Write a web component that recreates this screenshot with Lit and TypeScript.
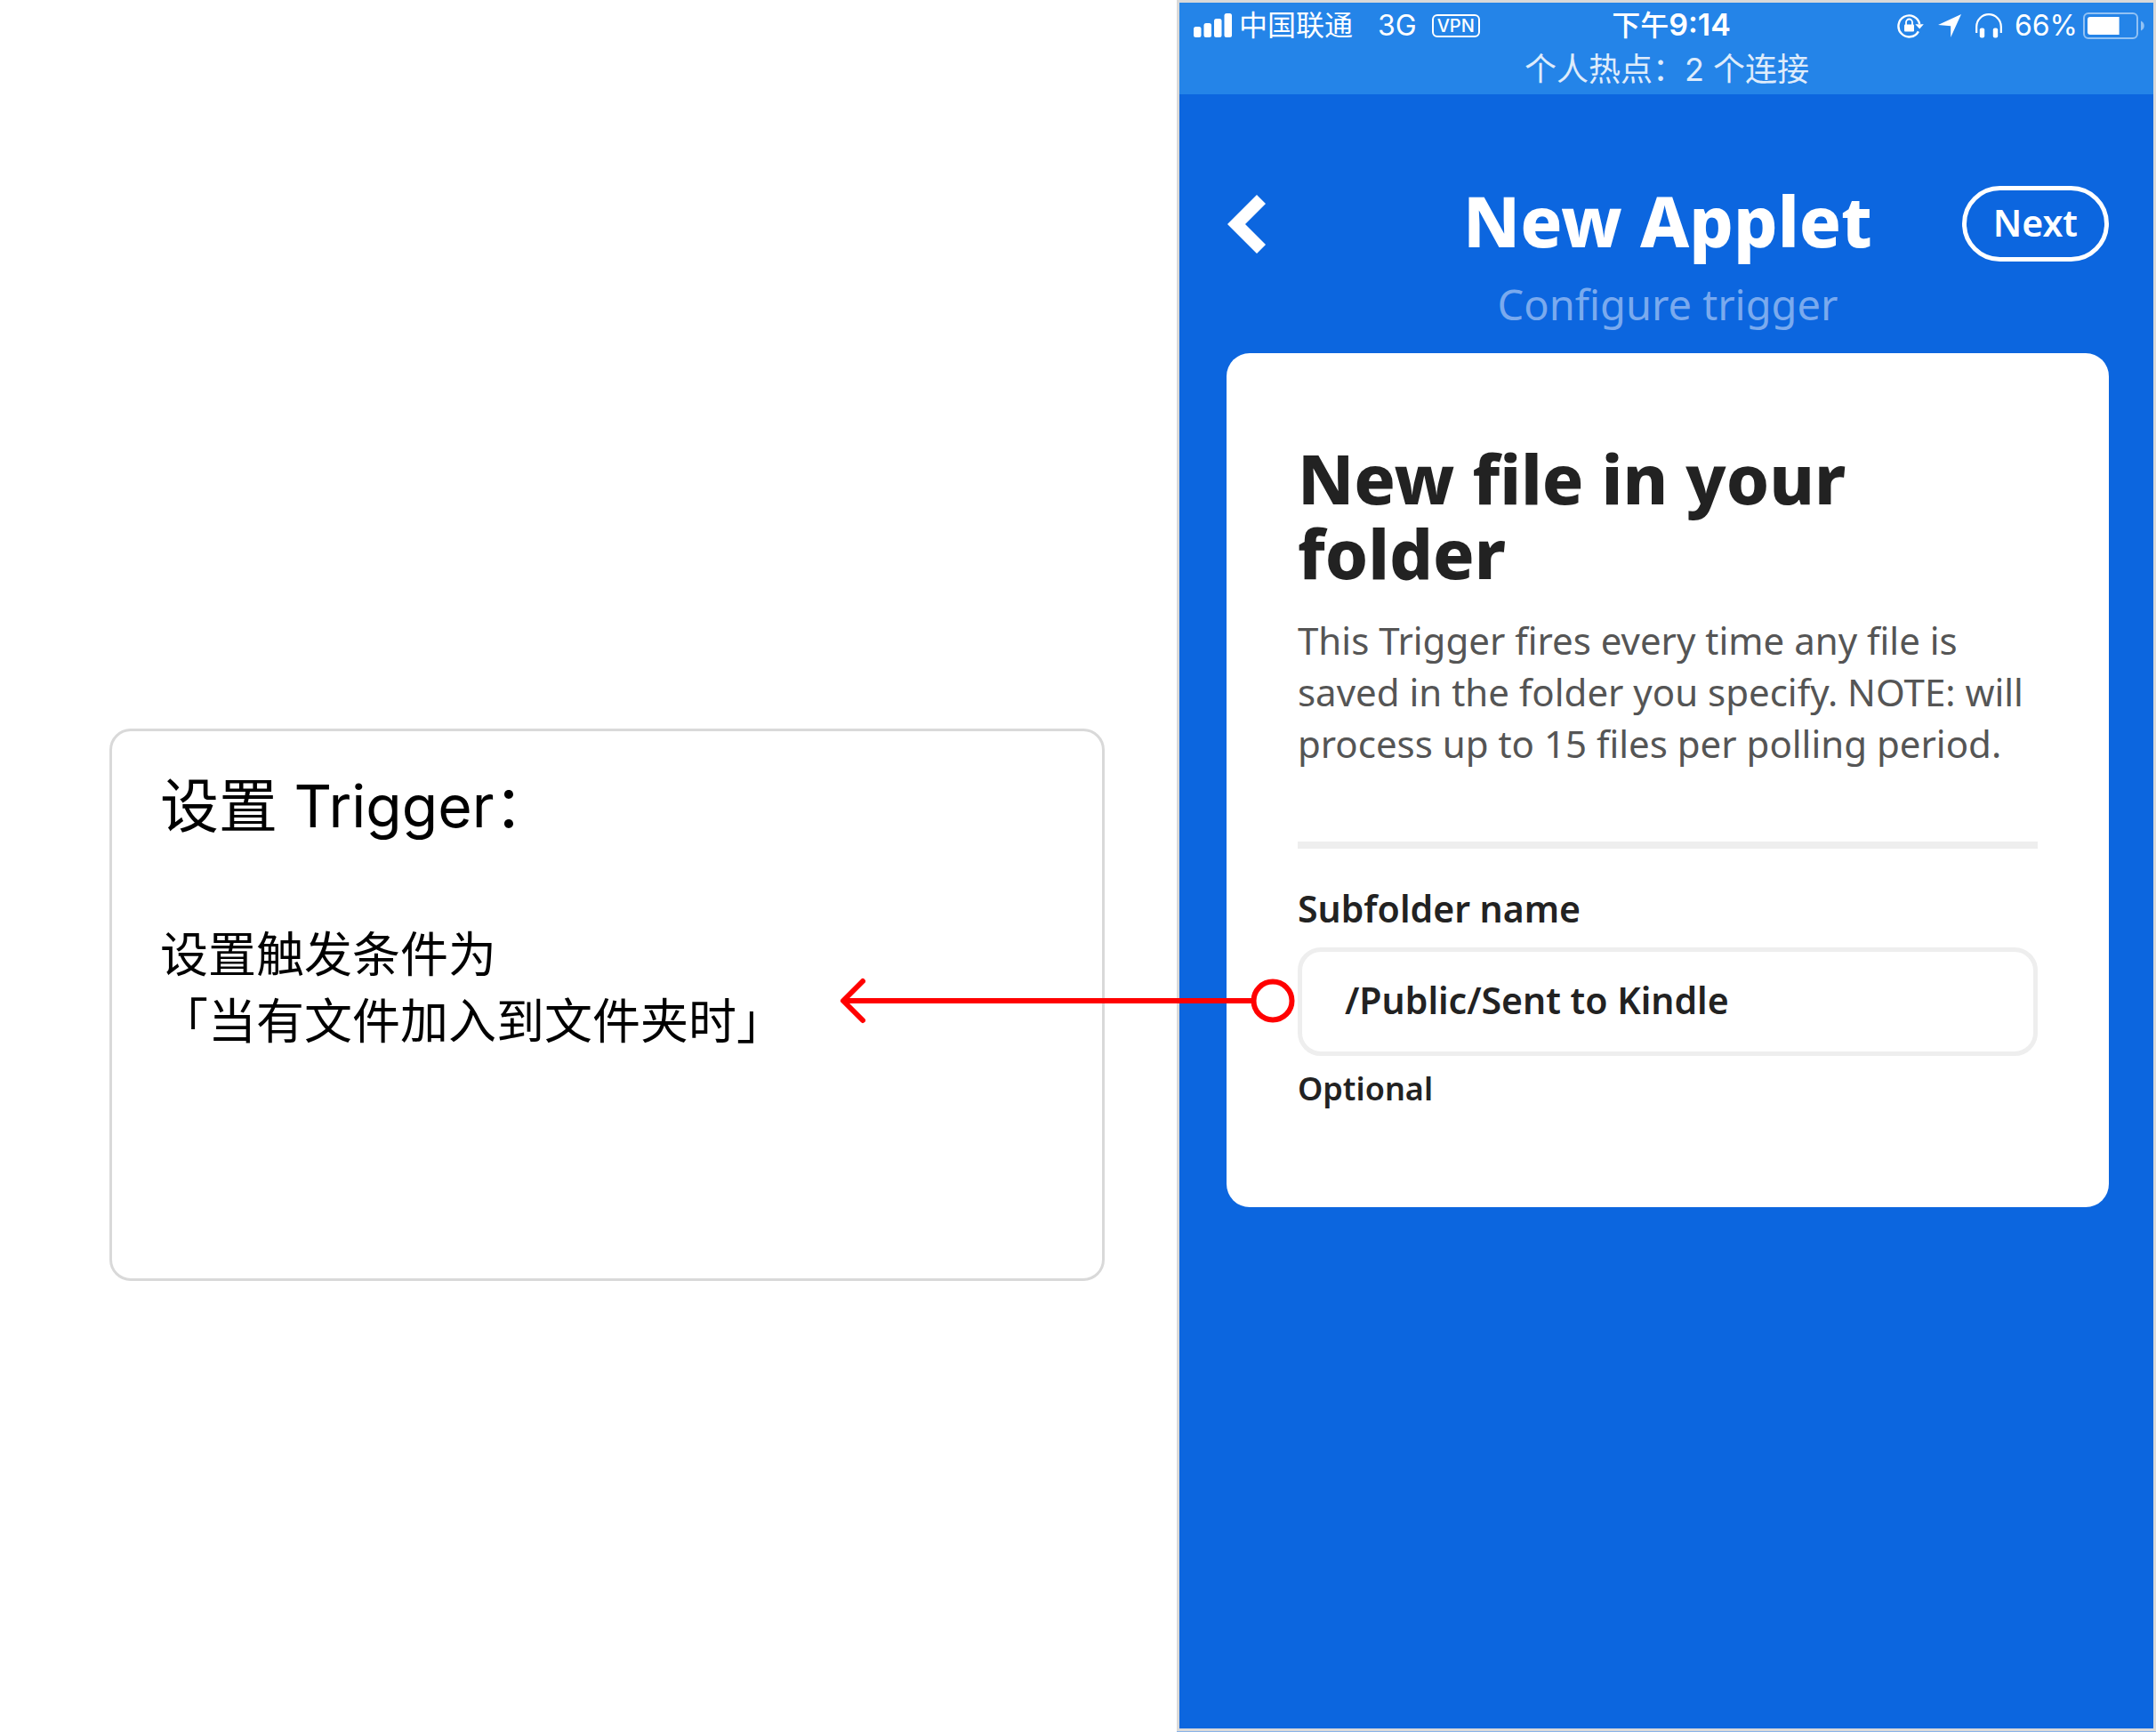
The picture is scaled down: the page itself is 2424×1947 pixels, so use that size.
import { LitElement, html, css } from "lit";
import { customElement, property, state } from "lit/decorators.js";

/** iOS status bar with carrier, clock, indicators and the hotspot line. */
@customElement("status-bar")
class StatusBar extends LitElement {
  @property() carrier = "";
  @property() network = "";
  @property() time = "";
  @property() meridiem = "";
  @property({ type: Number }) battery = 0;
  @property() notice = "";

  static styles = css`
    :host {
      display: block;
      padding: 1px 9px 2px 16px;
      background: #2484e8;
      color: #fff;
      font-family: Inter, "Noto Sans CJK SC", sans-serif;
      font-size: 32px;
    }
    .row {
      display: grid;
      grid-template-columns: 1fr auto 1fr;
      align-items: center;
      height: 48px;
      line-height: 48px;
    }
    .side {
      display: flex;
      align-items: center;
      white-space: nowrap;
    }
    .end {
      justify-content: flex-end;
    }
    .carrier {
      margin-left: 7px;
    }
    .network {
      margin-left: 28px;
    }
    .vpn {
      box-sizing: border-box;
      height: 26px;
      margin-left: 17px;
      padding: 0 4px;
      border: 2px solid #fff;
      border-radius: 6px;
      font-size: 20px;
      font-weight: 500;
      line-height: 22px;
    }
    .time {
      padding-left: 4px;
      font-weight: 500;
    }
    .clock {
      font-size: 34px;
      font-weight: 600;
    }
    .lock,
    .location {
      margin-right: 16px;
    }
    .phones {
      margin-right: 14px;
    }
    .battery {
      margin-left: 6px;
    }
    .notice {
      margin: 0;
      padding-right: 6px;
      font-size: 36px;
      line-height: 52px;
      text-align: center;
      opacity: 0.85;
    }
    svg {
      display: block;
      flex: none;
    }
  `;

  render() {
    return html`
      <div class="row">
        <div class="side">
          <svg width="44" height="28" viewBox="0 0 44 28" fill="#fff" aria-hidden="true">
            <rect x="0" y="15" width="8.5" height="12" rx="2.5" />
            <rect x="11.5" y="11" width="8.5" height="16" rx="2.5" />
            <rect x="23" y="6" width="8.5" height="21" rx="2.5" />
            <rect x="34.5" y="0" width="8.5" height="27" rx="2.5" />
          </svg>
          <span class="carrier">${this.carrier}</span>
          <span class="network">${this.network}</span>
          <span class="vpn">VPN</span>
        </div>
        <div class="time">${this.meridiem}<span class="clock">${this.time}</span></div>
        <div class="side end">
          <svg class="lock" width="30" height="28" viewBox="0 0 30 28" aria-hidden="true">
            <path d="M23.9 20.3A12 12 0 1 1 25.2 12" fill="none" stroke="#fff" stroke-width="2.4" />
            <path d="M20.4 12.2h9.4L25.2 17.4z" fill="#fff" />
            <rect x="8" y="12.6" width="11" height="8" rx="1" fill="#fff" />
            <path d="M10 13V10a3.5 3.5 0 0 1 7 0v3" fill="none" stroke="#fff" stroke-width="1.8" />
          </svg>
          <svg class="location" width="26" height="28" viewBox="0 0 26 28" aria-hidden="true">
            <path d="M26 1 14.2 27V14.3L0 13z" fill="#fff" />
          </svg>
          <svg class="phones" width="30" height="28" viewBox="0 0 30 28" aria-hidden="true">
            <path d="M1.2 22V15a13.8 13.8 0 0 1 27.6 0v7" fill="none" stroke="#fff" stroke-width="2.2" />
            <rect x="4.8" y="16.5" width="5.4" height="11" rx="2" fill="#fff" />
            <rect x="19.8" y="16.5" width="5.4" height="11" rx="2" fill="#fff" />
          </svg>
          <span>${this.battery}%</span>
          <svg class="battery" width="70" height="30" viewBox="0 0 70 30" aria-hidden="true">
            <rect x="1" y="1" width="60" height="28" rx="5" fill="none" stroke="#fff" stroke-opacity=".5" stroke-width="2" />
            <path d="M65 9.5c5 2 5 9 0 11z" fill="#fff" fill-opacity=".5" />
            <path d="M8 5h${(54 * this.battery) / 100 - 3}v20H8a3 3 0 0 1-3-3V8a3 3 0 0 1 3-3z" fill="#fff" />
          </svg>
        </div>
      </div>
      <p class="notice">${this.notice}</p>
    `;
  }
}

/** Explanatory card beside the phone screen. */
@customElement("note-card")
class NoteCard extends LitElement {
  @property() heading = "";
  @property({ type: Array }) lines: string[] = [];

  static styles = css`
    :host {
      display: block;
      box-sizing: border-box;
      min-height: 621px;
      padding: 47px 54px;
      border: 3px solid #d9d9d9;
      border-radius: 24px;
      background: #fff;
      color: #000;
      font-family: Inter, "Noto Sans CJK SC", sans-serif;
      line-height: 75px;
    }
    h1 {
      margin: 0 0 92px;
      font-size: 66px;
      font-weight: 400;
    }
    p {
      margin: 0;
      font-size: 54px;
    }
  `;

  render() {
    return html`
      <h1>${this.heading}</h1>
      ${this.lines.map((line) => html`<p>${line}</p>`)}
    `;
  }
}

/** Phone screen with the trigger form. */
@customElement("phone-screen")
class PhoneScreen extends LitElement {
  @state() private folder = "/Public/Sent to Kindle";

  static styles = css`
    :host {
      display: block;
      box-sizing: border-box;
      border: 3px solid #d9d9d9;
      background: #0c66df;
      box-shadow: 0 1px #8ab4e8;
      font-family: "Noto Sans", sans-serif;
      color: #222;
    }
    main {
      padding: 103px 50px 100px 53px;
    }
    header {
      display: grid;
      grid-template-columns: 1fr auto 1fr;
      align-items: start;
      color: #fff;
    }
    button {
      box-sizing: border-box;
      height: 85px;
      background: none;
      color: inherit;
      font: inherit;
      cursor: pointer;
    }
    .back {
      justify-self: start;
      padding: 0;
      border: 0;
    }
    .back svg {
      display: block;
    }
    .next {
      justify-self: end;
      padding: 0 30px 4px;
      border: 5px solid #fff;
      border-radius: 43px;
      font-size: 41px;
      font-weight: 600;
      line-height: 70px;
    }
    h1 {
      margin: 0;
      font-size: 78px;
      font-weight: 800;
      line-height: 78px;
      white-space: nowrap;
    }
    .step {
      margin: 18px 0 25px;
      color: #7aaaee;
      font-size: 47px;
      line-height: 60px;
      text-align: center;
    }
    .card {
      padding: 99px 80px 110px;
      border-radius: 26px;
      background: #fff;
    }
    h2 {
      margin: 0;
      font-size: 77px;
      font-weight: 800;
      line-height: 84px;
    }
    .about {
      margin: 27px 0 81px;
      color: #555;
      font-size: 42px;
      line-height: 58px;
    }
    hr {
      height: 8px;
      margin: 0 0 42px;
      border: 0;
      background: #eee;
    }
    label {
      display: block;
      margin-bottom: 19px;
      font-size: 41px;
      font-weight: 600;
      line-height: 50px;
    }
    .field {
      position: relative;
    }
    input {
      display: block;
      box-sizing: border-box;
      width: 100%;
      height: 122px;
      padding: 0 48px 4px;
      border: 5px solid #eee;
      border-radius: 26px;
      outline: none;
      background: #fff;
      color: inherit;
      font: 600 41px "Noto Sans", sans-serif;
    }
    .pointer {
      position: absolute;
      top: calc(50% - 31px);
      right: calc(100% + 3px);
    }
    .hint {
      margin: 14px 0 0;
      font-size: 36px;
      font-weight: 600;
      line-height: 46px;
    }
  `;

  private edit(event: Event) {
    this.folder = (event.target as HTMLInputElement).value;
  }

  render() {
    return html`
      <status-bar
        carrier="中国联通"
        network="3G"
        meridiem="下午"
        time="9:14"
        battery="66"
        notice="个人热点：2 个连接"
      ></status-bar>
      <main>
        <header>
          <button class="back" type="button" aria-label="Back">
            <svg width="44" height="66" viewBox="0 0 44 66" aria-hidden="true">
              <path d="M34 0 44 10 21 33 44 56 34 66 1 33z" fill="#fff" />
            </svg>
          </button>
          <h1>New Applet</h1>
          <button class="next" type="button">Next</button>
        </header>
        <p class="step">Configure trigger</p>
        <section class="card">
          <h2>New file in your folder</h2>
          <p class="about">
            This Trigger fires every time any file is saved in the folder you specify. NOTE: will
            process up to 15 files per polling period.
          </p>
          <hr />
          <label for="folder">Subfolder name</label>
          <div class="field">
            <input id="folder" type="text" aria-describedby="hint" .value=${this.folder} @input=${this.edit} />
            <svg class="pointer" width="514" height="60" viewBox="0 0 514 60" fill="none" stroke="#f00" stroke-width="6" aria-hidden="true">
              <path d="M28 8 6 30 28 52" stroke-linecap="round" stroke-linejoin="round" />
              <path d="M6 30H468" />
              <circle cx="489" cy="30" r="21.5" fill="#fff" />
            </svg>
          </div>
          <p class="hint" id="hint">Optional</p>
        </section>
      </main>
    `;
  }
}

@customElement("app-root")
class AppRoot extends LitElement {
  static styles = css`
    :host {
      display: grid;
      grid-template-columns: 1323fr 1101fr;
      min-height: 100vh;
      background: #fff;
    }
    aside {
      padding: 819px 81px 0 123px;
    }
    phone-screen {
      margin-bottom: 1px;
    }
  `;

  render() {
    return html`
      <aside>
        <note-card
          heading="设置 Trigger："
          .lines=${["设置触发条件为", "「当有文件加入到文件夹时」"]}
        ></note-card>
      </aside>
      <phone-screen></phone-screen>
    `;
  }
}
